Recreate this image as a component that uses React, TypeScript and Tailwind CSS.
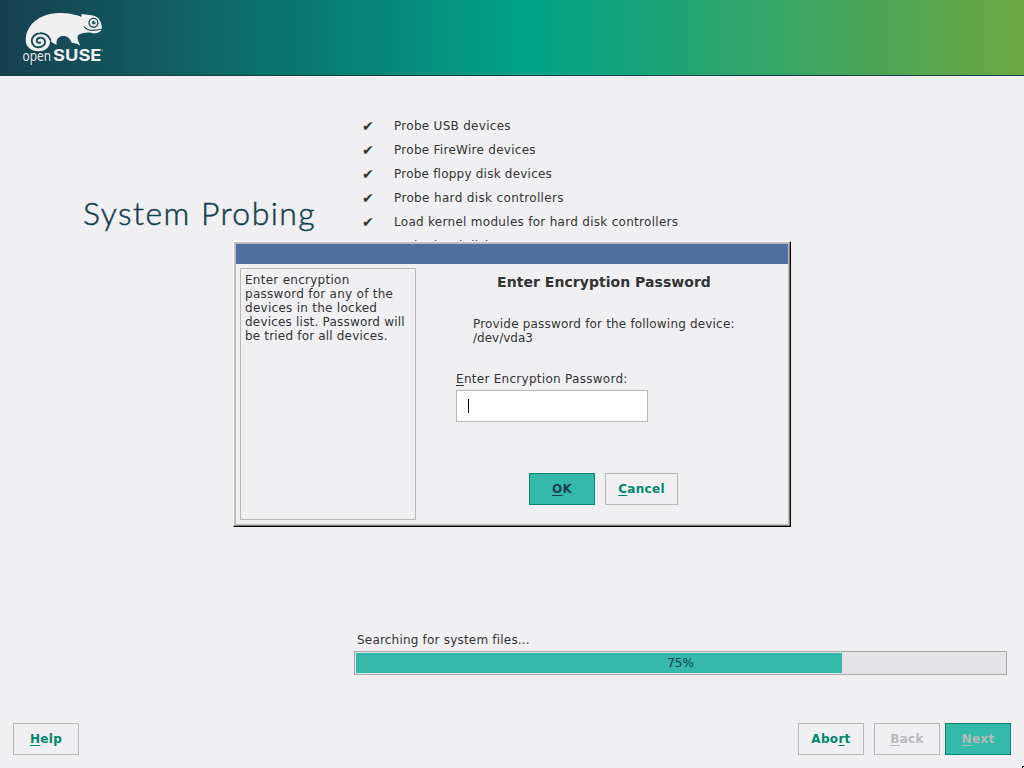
import type { ReactNode } from "react";

const steps = [
  { label: "Probe USB devices", done: true, tracking: "tracking-[0.29px]" },
  { label: "Probe FireWire devices", done: true, tracking: "tracking-[0.28px]" },
  { label: "Probe floppy disk devices", done: true, tracking: "tracking-[0.22px]" },
  { label: "Probe hard disk controllers", done: true, tracking: "tracking-[0.35px]" },
  { label: "Load kernel modules for hard disk controllers", done: true, tracking: "tracking-[0.29px]" },
  { label: "Probe hard disks", done: false, tracking: "tracking-[0.35px]" },
];

function Key({ children }: { children: ReactNode }) {
  return <span className="underline decoration-1 underline-offset-2">{children}</span>;
}

function Button({ children, className }: { children: ReactNode; className: string }) {
  return (
    <button className={`flex h-8 items-center justify-center border pb-px text-[12px] font-bold tracking-[0.3px] ${className}`}>
      <span>{children}</span>
    </button>
  );
}

function Logo() {
  return (
    <svg width="110" height="74" viewBox="0 0 110 74" aria-label="openSUSE">
      <path
        fill="#f0f0f0"
        d="M25.700 40 C26 26 38 13.500 59 13 C68 13 76 14.500 81.500 17 L81.500 14 C86 15 93 14.500 97.500 17.500 C100.500 20 102 25 102 29 C100 33 96 34 92 33 C87 32 83 33 79 34.500 C76.500 36 77.500 39.500 80.500 46 C77 43 73.500 43.500 71.500 42.500 C70 38 67 36 63.500 36 C59 36 56 38.500 56.500 45 C53.500 43 51 42.500 50 40 C50.500 47 45.500 51.200 39 51.200 C31 51.200 25.700 47 25.700 40 Z"
      />
      <path
        fill="none"
        stroke="#174c58"
        strokeWidth="1.900"
        strokeLinecap="round"
        d="M50.500 40 C49 35.500 44.500 33 40 33.300 C35 33.500 31.800 37 31.800 41 C32 45.500 35.500 47.500 39 47.300 C43 47 45.300 44.500 45 41.500 C44.500 38.500 42 37.500 39.800 37.700 C37.500 38 36.500 39.500 36.700 41.200 C37 42.700 38.500 43.200 40.200 42.500"
      />
      <circle cx="93.500" cy="22.800" r="4.400" fill="none" stroke="#174c58" strokeWidth="1.400" />
      <circle cx="93.800" cy="22.600" r="1.900" fill="#174c58" />
      <circle cx="94.700" cy="22" r="0.700" fill="#f0f0f0" />
      <path d="M84 26.500 C87.500 31.500 95 31 102 29" fill="none" stroke="#174c58" strokeWidth="1.300" />
      <text x="22.500" y="61" fontSize="14" textLength="28.500" lengthAdjust="spacingAndGlyphs" fill="#f0f0f0" className="font-['Open_Sans',sans-serif]">open</text>
      <text x="53" y="61" fontSize="15.500" fontWeight="700" textLength="48.500" lengthAdjust="spacingAndGlyphs" fill="#f0f0f0" className="font-['Inter',sans-serif]">SUSE</text>
      <circle cx="102.300" cy="50.500" r="0.700" fill="#f0f0f0" opacity="0.6" />
    </svg>
  );
}

export default function App() {
  return (
    <div className="relative flex h-[768px] w-[1024px] flex-col overflow-hidden bg-[#f0f0f2] font-['DejaVu_Sans',sans-serif] text-[12px] text-[#333333]">
      <header className="h-[76px] shrink-0 border-b border-[#173f4f] bg-[linear-gradient(90deg,#173f4f_0%,#00a489_52%,#6da741_100%)]">
        <Logo />
      </header>

      <main className="flex h-[600px] shrink-0">
        <div className="w-[354px] shrink-0 pl-[83px] pt-[113px]">
          <h1 className="whitespace-nowrap font-['Lato',sans-serif] text-[32px] font-light leading-[48px] tracking-[1.45px] text-[#173f4f] [-webkit-text-stroke:0.5px_#173f4f]">System Probing</h1>
        </div>
        <div className="flex w-[653px] flex-col pt-[38px]">
          <ul className="flex h-[500px] flex-col">
            {steps.map((step) => (
              <li key={step.label} className="flex h-6 items-center leading-[14px]">
                <span className="w-10 pl-2 text-[14px]">{step.done ? "✔" : ""}</span>
                <span className={step.tracking}>{step.label}</span>
              </li>
            ))}
          </ul>
          <div className="mt-[19px] pl-[3px] leading-[14px] tracking-[0.2px]">Searching for system files...</div>
          <div className="mt-[4px] flex h-6 shrink-0 border border-[#a8a8a8] bg-[#e4e4e6] p-px">
            <div className="grid w-full">
              <div className="col-start-1 row-start-1 w-[486px] bg-[#35b9ab]" />
              <div className="col-start-1 row-start-1 self-center text-center leading-[14px] text-[#173f4f]">75%</div>
            </div>
          </div>
        </div>
      </main>

      <footer className="mt-[47px] flex h-8 shrink-0 px-[13px]">
        <Button className="w-[66px] border-[#b8b8b8] text-[#00876c]"><Key>H</Key>elp</Button>
        <Button className="ml-auto w-[66px] border-[#b8b8b8] text-[#00876c]">Abo<Key>r</Key>t</Button>
        <Button className="ml-[10px] w-[66px] border-[#b8b8b8] text-[#b9b9bb]"><Key>B</Key>ack</Button>
        <Button className="ml-[5px] w-[66px] border-[#00876c] bg-[#35b9ab] text-[#b9b9bb]"><Key>N</Key>ext</Button>
      </footer>

      <section role="dialog" className="absolute left-[233px] top-[241px] h-[286px] w-[558px] border border-b-black border-r-black border-l-white border-t-white bg-[#f0f0f2]">
        <div className="h-full border border-b-[#808080] border-r-[#808080] border-l-[#bebebe] border-t-[#bebebe]">
          <div className="flex h-full flex-col border border-[#bebebe]">
            <div className="h-5 shrink-0 bg-[#4e6fa0]" />
            <div className="flex grow p-1">
              <aside className="h-[252px] w-[176px] shrink-0 border border-[#b8b8b8] px-1 pt-1 leading-[14px]">
                <span className="tracking-[0.27px]">Enter encryption<br />password for any of the<br />devices in the locked</span><br />
                <span className="whitespace-nowrap tracking-[0.2px]">devices list. Password will</span><br />
                <span className="tracking-[0.18px]">be tried for all devices.</span>
              </aside>
              <div className="flex grow flex-col pl-[40px]">
                <h2 className="mt-[6px] pr-[32px] text-center text-[14px] font-bold leading-[17px] tracking-[0.04px]">Enter Encryption Password</h2>
                <p className="ml-[17px] mt-[26px] leading-[14px] tracking-[0.18px]">Provide password for the following device:<br /><span className="tracking-normal">/dev/vda3</span></p>
                <label className="mt-[27px] leading-[14px] tracking-[0.28px]"><Key>E</Key>nter Encryption Password:</label>
                <div className="mt-[4px] flex h-8 w-[192px] items-center border border-[#b8b8b8] bg-white pl-[11px]">
                  <div className="h-[14px] w-px bg-black" />
                </div>
                <div className="mt-[51px] flex pl-[73px]">
                  <Button className="w-[66px] border-[#00876c] bg-[#35b9ab] text-[#173f4f]"><Key>O</Key>K</Button>
                  <Button className="ml-[10px] w-[73px] border-[#b8b8b8] text-[#00876c]"><Key>C</Key>ancel</Button>
                </div>
              </div>
            </div>
          </div>
        </div>
      </section>
      <div className="absolute bottom-0 right-0 h-[2px] w-[2px] border-l border-t border-black" />
    </div>
  );
}
